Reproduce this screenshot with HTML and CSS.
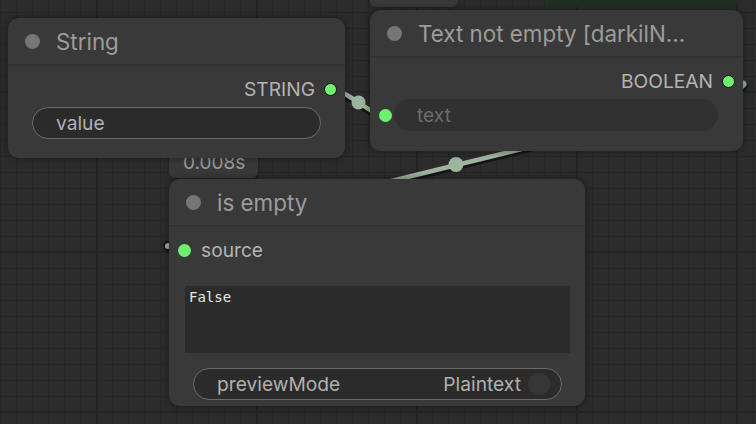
FILE: index.html
```html
<!DOCTYPE html>
<html>
<head>
<meta charset="utf-8">
<link rel="stylesheet" href="styles.css">
</head>
<body>
<div class="canvas">
  <svg class="links" width="756" height="424" viewBox="0 0 756 424">
    <g class="link">
      <path class="shadow" d="M331 89 C346 89 371 116 386 116"/>
      <path class="wire" d="M331 89 C346 89 371 116 386 116"/>
      <circle class="mid" cx="358.5" cy="102.5" r="7"/>
    </g>
    <g class="link">
      <path class="shadow" d="M728 81 C870 81 43 249 185 249"/>
      <path class="wire" d="M728 81 C870 81 43 249 185 249"/>
      <circle class="mid" cx="456" cy="164.5" r="7.5"/>
      <circle class="end" cx="168" cy="246" r="4"/>
    </g>
  </svg>

  <div class="badge badge-top">0.001s</div>
  <div class="group-top"><span>Display Any</span></div>
  <div class="badge badge-time">0.008s</div>

  <div class="node node-string">
    <div class="title"><span class="tdot"></span><span class="ttext">String</span></div>
    <div class="body">
      <div class="slot out"><span class="label">STRING</span><span class="sdot ring"></span></div>
      <div class="widget pill"><span>value</span></div>
    </div>
  </div>

  <div class="node node-text">
    <div class="title"><span class="tdot"></span><span class="ttext">Text not empty [darkilN...</span></div>
    <div class="body">
      <div class="slot out"><span class="label">BOOLEAN</span><span class="sdot ring"></span></div>
      <div class="widget-row">
        <span class="sdot in-dot"></span>
        <div class="widget textw"><span>text</span></div>
      </div>
    </div>
  </div>

  <div class="node node-empty">
    <div class="title"><span class="tdot"></span><span class="ttext">is empty</span></div>
    <div class="body">
      <div class="slot in"><span class="sdot"></span><span class="label">source</span></div>
      <div class="preview">False</div>
      <div class="widget pill combo"><span>previewMode</span><span class="val">Plaintext</span><span class="knob"></span></div>
    </div>
  </div>
</div>
</body>
</html>
```

FILE: styles.css
```css
* { box-sizing: border-box; }
html, body { margin: 0; padding: 0; }
body {
  width: 756px;
  height: 424px;
  overflow: hidden;
  font-family: Inter, "Noto Sans", "Liberation Sans", sans-serif;
  background-color: #2c2c2c;
}
.canvas {
  position: relative;
  width: 756px;
  height: 424px;
  overflow: hidden;
  background-color: #2c2c2c;
  background-image:
    linear-gradient(to right, #232323 2px, transparent 2px),
    linear-gradient(to bottom, #232323 2px, transparent 2px),
    linear-gradient(to right, #262626 1px, transparent 1px),
    linear-gradient(to bottom, #262626 1px, transparent 1px);
  background-size: 160px 160px, 160px 160px, 16px 16px, 16px 16px;
  background-position: 96px 0, 0 251px, 0 0, 0 12px;
}
.links { position: absolute; left: 0; top: 0; }
.link .shadow { fill: none; stroke: #151515; stroke-width: 7; transform: translate(0, 1.5px); }
.link .wire { fill: none; stroke: #9eb49f; stroke-width: 4.5; }
.link .mid { fill: #9eb49f; }
.link .end { fill: #9eb49f; stroke: #151515; stroke-width: 2; }

.badge {
  position: absolute;
  background: #393939;
  border-radius: 6px;
  color: #9a9a9a;
  font-size: 19px;
  padding: 0 14px;
  line-height: 30px;
  box-shadow: 0 0 4px rgba(0,0,0,0.35);
}
.badge-top { left: 370px; top: -23px; width: 88px; }
.badge-time { left: 169px; top: 148px; width: 89px; height: 30px; }
.group-top {
  position: absolute;
  left: 544px;
  top: -30px;
  width: 194px;
  height: 37px;
  background: #213021;
  border-radius: 7px;
  color: #cfd8cf;
  font-size: 19px;
  padding: 4px 0 0 40px;
}

.node {
  position: absolute;
  display: flex;
  flex-direction: column;
  background: #393939;
  border-radius: 11px;
  box-shadow: 0 0 8px rgba(0,0,0,0.45);
}
.title {
  height: 48px;
  display: flex;
  align-items: center;
  border-bottom: 2px solid #323232;
  padding-left: 17px;
}
.tdot {
  width: 15px;
  height: 15px;
  border-radius: 50%;
  background: #767676;
  flex: none;
}
.ttext {
  margin-left: 16px;
  color: #9c9c9c;
  font-size: 22.4px;
  white-space: nowrap;
}
.body { display: flex; flex-direction: column; }
.slot {
  height: 30px;
  display: flex;
  align-items: center;
  margin-top: 8px;
}
.slot .label { color: #b4b4b4; font-size: 19.2px; }
.slot.out { justify-content: flex-end; padding-right: 8px; }
.slot.out .label { margin-right: 9px; }
.sdot {
  width: 13px;
  height: 13px;
  border-radius: 50%;
  background: #70f070;
  flex: none;
}
.sdot.ring { border: 1.5px solid #111; }
.slot.in { padding-left: 9px; }
.slot.in .label { margin-left: 10px; }

.widget {
  height: 32px;
  border-radius: 16px;
  display: flex;
  align-items: center;
  font-size: 19.2px;
}
.pill {
  border: 1.5px solid #6a6a6a;
  background: #2b2b2b;
  color: #b0b0b0;
  padding-left: 23px;
}
.node-string { left: 8px; top: 18px; width: 337px; height: 140px; }
.node-string .pill { margin: 3px 24px 0 24px; }

.node-text { left: 370px; top: 10px; width: 373px; height: 141px; }
.widget-row {
  display: flex;
  align-items: center;
  margin-top: 3px;
  padding-left: 9px;
}
.textw {
  flex: 1;
  margin: 0 25px 0 2px;
  background: #303030;
  color: #6b6b6b;
  padding-left: 23px;
}

.node-empty { left: 169px; top: 179px; width: 416px; height: 227px; }
.preview {
  margin: 21px 15px 0 16px;
  height: 67px;
  background: #2b2b2b;
  color: #e6e6e6;
  font-family: "DejaVu Sans Mono", "Liberation Mono", monospace;
  font-size: 14px;
  padding: 3px 4px;
}
.combo { margin: 15px 23px 0 24px; padding-right: 11px; }
.combo .val { margin-left: auto; margin-right: 7px; }
.knob {
  width: 22px;
  height: 22px;
  border-radius: 50%;
  background: #363636;
}
```
